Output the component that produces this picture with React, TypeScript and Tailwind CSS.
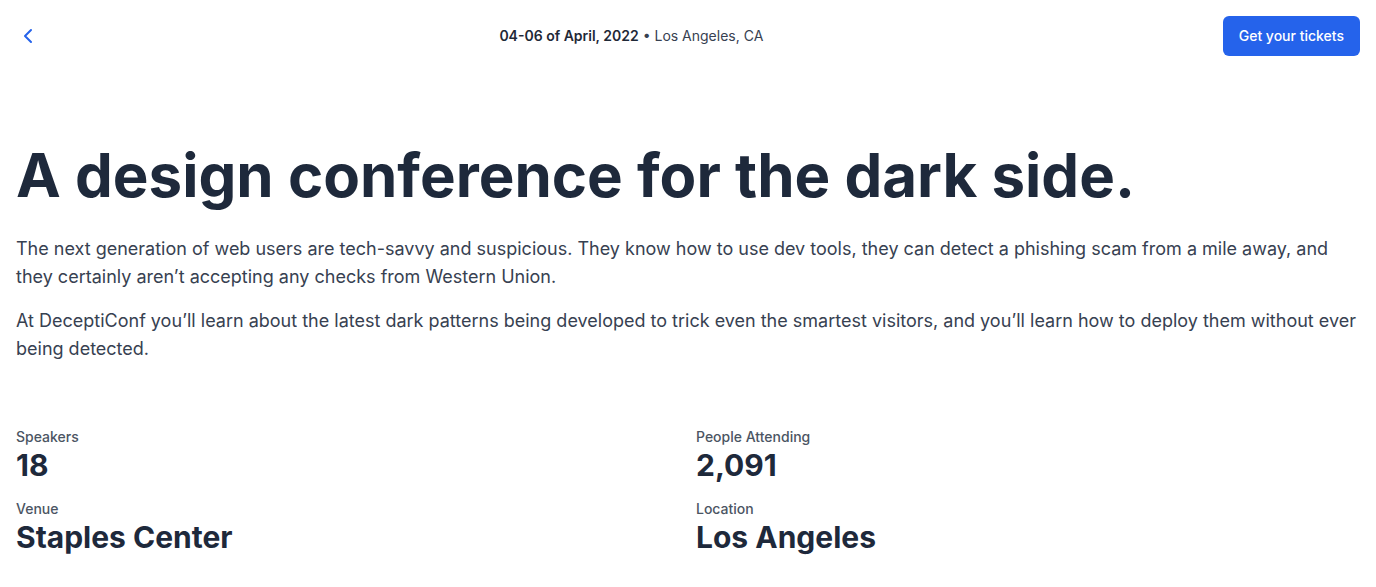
import { ChevronLeft } from "lucide-react";

const stats = [
  { label: "Speakers", value: "18" },
  { label: "People Attending", value: "2,091" },
  { label: "Venue", value: "Staples Center" },
  { label: "Location", value: "Los Angeles" },
];

export default function App() {
  return (
    <div className="min-h-screen bg-white px-4 font-['Inter',sans-serif] text-[#1f2937]">
      {/* Top bar */}
      <header className="flex h-[72px] items-center justify-between">
        <button className="flex h-6 w-6 items-center justify-center text-[#2563eb]">
          <ChevronLeft className="h-6 w-6" strokeWidth={2} />
        </button>
        <p className="text-sm text-[#374151]">
          <span className="font-semibold text-[#1f2937]">04-06 of April, 2022</span> • Los Angeles, CA
        </p>
        <button className="h-10 rounded-md bg-[#2563eb] px-4 text-sm font-medium text-white">
          Get your tickets
        </button>
      </header>

      {/* Intro */}
      <section className="pt-[73px]">
        <h1 className="text-6xl leading-none font-bold text-[#1e293b]">
          A design conference for the dark side.
        </h1>
        <div className="mt-[30px] text-lg leading-7 text-[#374151]">
          <p className="mb-4">
            The next generation of web users are tech-savvy and suspicious. They know how to use dev tools, they can
            detect a phishing scam from a mile away, and they certainly aren’t accepting any checks from Western Union.
          </p>
          <p>
            At DeceptiConf you’ll learn about the latest dark patterns being developed to trick even the smartest
            visitors, and you’ll learn how to deploy them without ever being detected.
          </p>
        </div>
      </section>

      {/* Stats */}
      <dl className="mt-16 grid grid-cols-2 gap-4">
        {stats.map(s => (
          <div key={s.label}>
            <dt className="text-sm font-medium text-[#4b5563]">{s.label}</dt>
            <dd className="text-3xl font-bold text-[#1e293b]">{s.value}</dd>
          </div>
        ))}
      </dl>
    </div>
  );
}
